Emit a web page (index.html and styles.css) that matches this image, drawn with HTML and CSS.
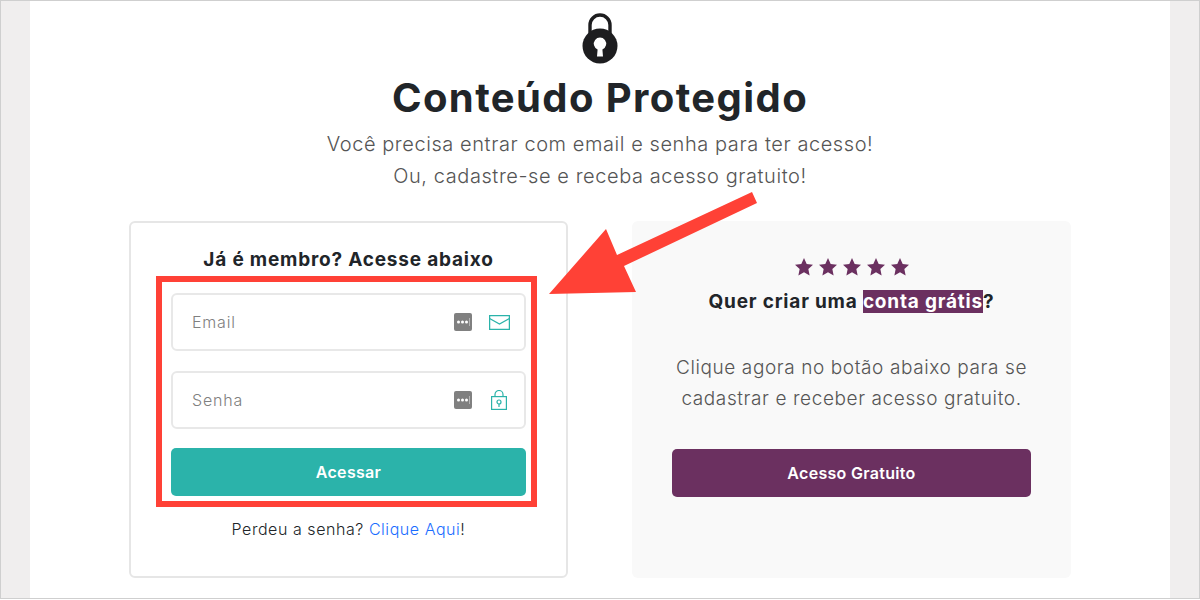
FILE: index.html
```html
<!DOCTYPE html>
<html lang="en">
<head>
  <meta charset="UTF-8" />
  <title>Conteúdo Protegido</title>
  <link rel="stylesheet" href="styles.css">
</head>
<body>

<div class="frame">
  <main class="page">
    <svg class="lock" width="36" height="52" viewBox="0 0 36 52">
      <path d="M8 24V12a10 10 0 0 1 20 0v12" fill="none" stroke="#1d1d1f" stroke-width="3.4"/>
      <circle cx="18" cy="33" r="17.5" fill="#1d1d1f"/>
      <path d="M15.6 36.5a6.2 6.2 0 1 1 4.8 0l.6 7h-6z" fill="#fff"/>
    </svg>
    <h1>Conteúdo Protegido</h1>
    <p class="lead">Você precisa entrar com email e senha para ter acesso!<br>Ou, cadastre-se e receba acesso gratuito!</p>

    <div class="columns">
      <section class="card login">
        <h3>Já é membro? Acesse abaixo</h3>
        <form class="highlight">
          <div class="field">
            <span class="placeholder">Email</span>
            <svg class="dots" width="18" height="18" viewBox="0 0 18 18">
              <rect width="18" height="18" rx="2" fill="#808080"/>
              <circle cx="4.5" cy="9" r="1.5" fill="#fff"/><circle cx="8.5" cy="9" r="1.5" fill="#fff"/><circle cx="12.5" cy="9" r="1.5" fill="#fff"/>
              <path d="M15.5 5v8" stroke="#b5b5b5"/>
            </svg>
            <svg class="ico" width="21" height="15" viewBox="0 0 21 15" fill="none" stroke="#2bb3aa" stroke-width="1.3">
              <rect x=".6" y=".6" width="19.8" height="13.8"/>
              <path d="M.6 3.5l9.9 5.500 9.900-5.500"/>
            </svg>
          </div>
          <div class="field">
            <span class="placeholder">Senha</span>
            <svg class="dots" width="18" height="18" viewBox="0 0 18 18">
              <rect width="18" height="18" rx="2" fill="#808080"/>
              <circle cx="4.5" cy="9" r="1.5" fill="#fff"/><circle cx="8.5" cy="9" r="1.5" fill="#fff"/><circle cx="12.5" cy="9" r="1.5" fill="#fff"/>
              <path d="M15.5 5v8" stroke="#b5b5b5"/>
            </svg>
            <svg class="ico lock-ico" width="16" height="20" viewBox="0 0 16 20" fill="none" stroke="#2bb3aa" stroke-width="1.2">
              <rect x=".6" y="6.6" width="14.8" height="12.8"/>
              <path d="M4 6.5V4.5a4 4 0 0 1 8 0v2"/>
              <circle cx="8" cy="12" r="2"/>
              <path d="M8 14v3"/>
            </svg>
          </div>
          <button type="button" class="btn btn-teal">Acessar</button>
        </form>
        <p class="lost">Perdeu a senha? <a href="#">Clique Aqui</a>!</p>
      </section>

      <section class="card promo">
        <div class="stars">
          <svg width="18" height="18" viewBox="0 0 24 24"><path d="M12 0l3.600 8 8.400.9-6.200 5.800 1.700 8.600L12 19l-7.500 4.300 1.700-8.600L0 8.900l8.400-.9z"/></svg>
          <svg width="18" height="18" viewBox="0 0 24 24"><path d="M12 0l3.600 8 8.400.9-6.200 5.800 1.700 8.600L12 19l-7.500 4.300 1.700-8.600L0 8.900l8.400-.9z"/></svg>
          <svg width="18" height="18" viewBox="0 0 24 24"><path d="M12 0l3.600 8 8.400.9-6.200 5.800 1.700 8.600L12 19l-7.500 4.300 1.700-8.600L0 8.900l8.400-.9z"/></svg>
          <svg width="18" height="18" viewBox="0 0 24 24"><path d="M12 0l3.600 8 8.400.9-6.200 5.800 1.700 8.600L12 19l-7.500 4.300 1.700-8.600L0 8.900l8.400-.9z"/></svg>
          <svg width="18" height="18" viewBox="0 0 24 24"><path d="M12 0l3.600 8 8.400.9-6.200 5.800 1.700 8.600L12 19l-7.500 4.300 1.700-8.600L0 8.900l8.400-.9z"/></svg>
        </div>
        <h3>Quer criar uma <mark>conta grátis</mark>?</h3>
        <p>Clique agora no botão abaixo para se cadastrar e receber acesso gratuito.</p>
        <button type="button" class="btn btn-purple">Acesso Gratuito</button>
      </section>
    </div>
  </main>

  <svg class="arrow" width="220" height="110" viewBox="0 0 220 110">
    <path d="M0 108L57 43 68 69 203 6 208 17 75 80 87 106Z" fill="#ff4136"/>
  </svg>
</div>

</body>
</html>
```

FILE: styles.css
```css
html, body {
  margin: 0;
  height: 100%;
  overflow: hidden;
}

body {
  font-family: Inter, 'Open Sans', sans-serif;
  background: #fff;
  color: #212529;
}

.frame {
  position: relative;
  box-sizing: border-box;
  width: 1200px;
  height: 599px;
  border: 1px solid #cfcfcf;
  background: #f0eeee;
  padding: 0 29px;
}

.page {
  background: white;
  height: 100%;
  text-align: center;
  overflow: hidden;
}

.lock {
  display: block;
  margin: 12px auto 0;
}

h1 {
  margin: 8px 0 0;
  font-size: 40px;
  line-height: 50px;
  font-weight: 700;
  letter-spacing: 1.4px;
  color: #212529;
}

.lead {
  margin: 5px 0 0;
  font-size: 20px;
  line-height: 32px;
  font-weight: 300;
  letter-spacing: .57px;
  color: #555;
}

.columns {
  display: flex;
  gap: 64px;
  margin: 29px 0 0 99px;
}

.card {
  box-sizing: border-box;
  width: 439px;
  height: 357px;
  border-radius: 6px;
}

.card h3 {
  margin: 0;
  font-size: 19px;
  line-height: 24px;
  font-weight: 700;
  letter-spacing: .8px;
  color: #212529;
}

.login {
  border: 2px solid #e6e6e6;
  padding: 25px 25px 0;
}

.highlight {
  border: 6px solid #ff4136;
  margin: 4px 4px 0 0;
  padding: 11px 5px 6px 9px;
  height: 231px;
  box-sizing: border-box;
  display: flex;
  flex-direction: column;
}

.field {
  box-sizing: border-box;
  display: flex;
  flex: none;
  align-items: center;
  height: 58px;
  margin-bottom: 20px;
  padding: 0 14px 0 19px;
  border: 2px solid #e8e8e8;
  border-radius: 6px;
}

.placeholder {
  flex: 1;
  text-align: left;
  font-size: 16px;
  font-weight: 300;
  letter-spacing: .8px;
  color: #808080;
}

.ico {
  margin-left: 17px;
}

.lock-ico {
  margin: 0 3px 0 19px;
}

.btn {
  border: none;
  border-radius: 5px;
  color: white;
  font-family: inherit;
  font-size: 16px;
  font-weight: 600;
  letter-spacing: .3px;
  height: 48px;
}

.btn-teal {
  flex: none;
  background: #2bb3aa;
  margin-top: -1px;
}

.lost {
  margin: 11px 0 0;
  font-size: 16px;
  line-height: 22px;
  font-weight: 300;
  letter-spacing: .55px;
  color: #212529;
}

.lost a {
  color: #1a6dff;
  text-decoration: none;
}

.promo {
  background: #f9f9f9;
  padding: 37px 40px 0;
}

.stars {
  display: flex;
  justify-content: center;
  gap: 6px;
  fill: #6b3060;
  height: 18px;
}

.promo h3 {
  margin-top: 14px;
}

mark {
  background: #6b3060;
  color: white;
}

.promo p {
  margin: 38px 0 0;
  font-size: 19px;
  line-height: 31px;
  font-weight: 300;
  letter-spacing: .6px;
  color: #555;
}

.btn-purple {
  display: block;
  width: 100%;
  background: #6b3060;
  margin-top: 35px;
}

.arrow {
  position: absolute;
  left: 548px;
  top: 185px;
}
```
